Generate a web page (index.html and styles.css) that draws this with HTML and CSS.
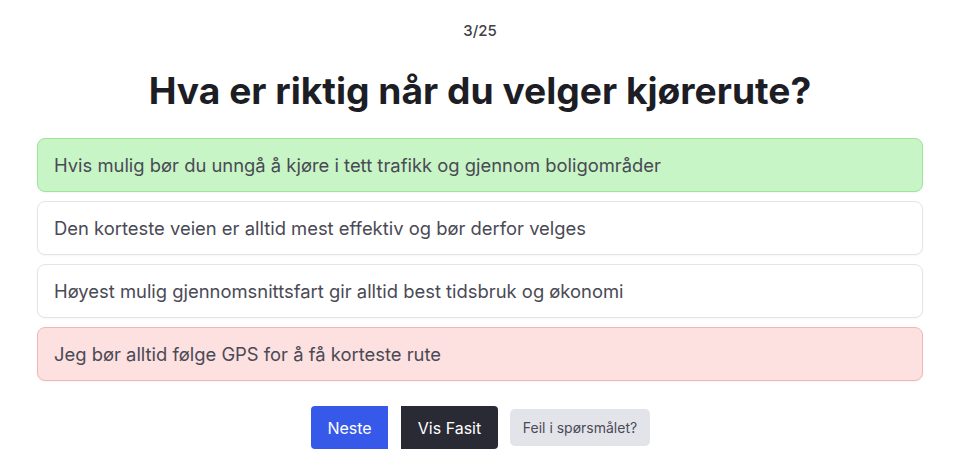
FILE: index.html
```html
<!DOCTYPE html>
<html lang="no">
<head>
<meta charset="utf-8">
<title>Quiz</title>
<link rel="stylesheet" href="styles.css">
</head>
<body>
<main class="quiz">
  <div class="counter">3/25</div>
  <h1 class="question">Hva er riktig når du velger kjørerute?</h1>
  <div class="options">
    <div class="option correct">Hvis mulig bør du unngå å kjøre i tett trafikk og gjennom boligområder</div>
    <div class="option">Den korteste veien er alltid mest effektiv og bør derfor velges</div>
    <div class="option">Høyest mulig gjennomsnittsfart gir alltid best tidsbruk og økonomi</div>
    <div class="option wrong">Jeg bør alltid følge GPS for å få korteste rute</div>
  </div>
  <div class="actions">
    <button class="btn btn-next">Neste</button>
    <button class="btn btn-answer">Vis Fasit</button>
    <button class="btn btn-report">Feil i spørsmålet?</button>
  </div>
</main>
</body>
</html>
```

FILE: styles.css
```css
* { box-sizing: border-box; }
html, body { margin: 0; padding: 0; background: #ffffff; }
body {
  font-family: Inter, "Noto Sans", sans-serif;
  color: #1f1f27;
}
.quiz {
  margin: 0 38px 0 37px;
  padding-top: 21px;
}
.counter {
  text-align: center;
  font-size: 15px;
  line-height: 20px;
  color: #3f3f46;
  font-weight: 500;
}
.question {
  margin: 27px 0 0;
  text-align: center;
  font-size: 37.2px;
  line-height: 46px;
  font-weight: 700;
  color: #1d1d25;
}
.options {
  margin-top: 24px;
  display: flex;
  flex-direction: column;
  gap: 9px;
}
.option {
  height: 54px;
  display: flex;
  align-items: center;
  padding: 0 16px;
  border: 1px solid #e4e4e7;
  border-radius: 8px;
  background: #ffffff;
  font-size: 18.4px;
  color: #4a4a55;
  box-shadow: 0 1px 2px rgba(0,0,0,0.04);
}
.option.correct {
  background: #c8f5c6;
  border-color: #9ee49b;
}
.option.wrong {
  background: #fde0e0;
  border-color: #f6b5b5;
}
.actions {
  margin-top: 25px;
  padding-left: 1px;
  display: flex;
  justify-content: center;
  align-items: center;
}
.btn {
  font-family: Inter, "Noto Sans", sans-serif;
  border: none;
  cursor: pointer;
}
.btn-next {
  width: 77px;
  height: 43px;
  background: #3659e9;
  color: #ffffff;
  font-size: 16px;
  border-radius: 4px 0 0 4px;
}
.btn-answer {
  width: 97px;
  height: 43px;
  margin-left: 13px;
  background: #2a2a35;
  color: #ffffff;
  font-size: 16px;
  border-radius: 0 4px 4px 0;
}
.btn-report {
  width: 140px;
  height: 37px;
  margin-left: 12px;
  background: #e3e4e9;
  color: #4b4b57;
  font-size: 14px;
  border-radius: 5px;
}
```
